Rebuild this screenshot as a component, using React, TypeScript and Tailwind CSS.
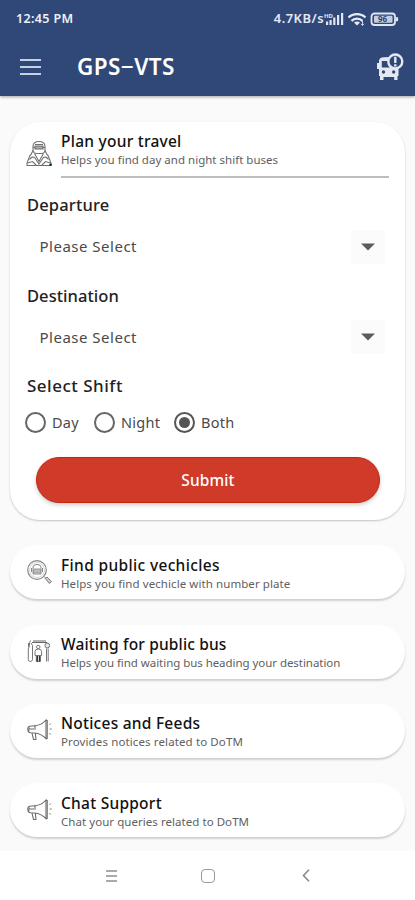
import React, { useState } from 'react';
import { clsx } from 'clsx';

const shifts = [
  { label: 'Day', box: 'w-[69px]' },
  { label: 'Night', box: 'w-[80px]' },
  { label: 'Both', box: 'w-[70px]' },
];

const links = [
  { title: 'Find public vechicles', titleClass: 'tracking-[0.35px]', text: 'Helps you find vechicle with number plate', textClass: 'tracking-[0.08px]', icon: <SearchBusIcon /> },
  { title: 'Waiting for public bus', titleClass: 'tracking-[0.15px]', text: 'Helps you find waiting bus heading your destination', textClass: 'tracking-[-0.05px]', icon: <BusStopIcon /> },
  { title: 'Notices and Feeds', titleClass: 'tracking-[0.25px]', text: 'Provides notices related to DoTM', textClass: 'tracking-[0.12px]', icon: <MegaphoneIcon /> },
  { title: 'Chat Support', titleClass: 'tracking-[0.25px]', text: 'Chat your queries related to DoTM', textClass: 'tracking-[0.05px]', icon: <MegaphoneIcon /> },
];

function StatusIcons() {
  return (
    <svg width="76" height="18" viewBox="0 0 76 18" fill="none" className="block">
      <text x="0" y="7.500" fontSize="6" fontWeight="700" fill="#dfe5f2">HD</text>
      <g fill="#dfe5f2">
        <rect x="2" y="11.500" width="2.200" height="3.500" />
        <rect x="5.500" y="10" width="2.200" height="5" />
        <rect x="9.200" y="7.500" width="2.200" height="7.500" />
        <rect x="13" y="5" width="2.200" height="10" />
        <rect x="17" y="3" width="2.200" height="12" />
      </g>
      <g stroke="#e6ebf5" strokeWidth="2.300">
        <path d="M24.500 7.500c4.500-4.500 12.500-4.500 17 0" />
        <path d="M27.500 10.800c3-2.900 8-2.900 11 0" />
      </g>
      <path d="M30 12.600c1.800-1.500 4.200-1.500 6 0l-3 3z" fill="#e6ebf5" />
      <path d="M38.500 11v4.500m-1.500-1.700 1.500 1.700 1.500-1.700" stroke="#cbd4e6" />
      <rect x="47.500" y="3.500" width="23.500" height="11.500" rx="3" stroke="#dfe5f2" strokeWidth="1.800" />
      <rect x="50" y="5.700" width="18.500" height="7.100" rx="1" fill="#c4cde0" />
      <text x="54" y="12.200" fontSize="8" fontWeight="700" fill="#304878">96</text>
      <path d="M73 7.200v4" stroke="#dfe5f2" strokeWidth="2.200" />
    </svg>
  );
}

function BusAlertIcon() {
  return (
    <svg width="28" height="28" viewBox="0 0 28 28" className="block">
      <path fill="#e3e8f3" fillRule="evenodd" d="M3 8Q3 4.500 8 4.200L15 4v10.500h7.500v8.500h-1v4h-3.300v-3H7.500v3H4v-4H3v-7H1V10h2zM5.800 8v6.500h8V8zM5.800 19a1.700 1.700 0 1 0 3.400 0 1.700 1.700 0 0 0-3.400 0zM16 19a1.700 1.700 0 1 0 3.400 0 1.700 1.700 0 0 0-3.400 0z" />
      <circle cx="19.300" cy="8.500" r="7" fill="#304878" stroke="#e3e8f3" strokeWidth="2.400" />
      <path d="M19.300 3.800v6.200M19.300 11.300v2.200" stroke="#e3e8f3" strokeWidth="2.400" />
    </svg>
  );
}

function TravelIcon() {
  return (
    <svg width="27" height="28" viewBox="0 0 27 28" fill="none" stroke="#707070" strokeWidth="1.100" className="block">
      <path d="M7 10.500V6Q7.500 1.500 13 1.500T19 6v4.500Q18.500 13.500 15.500 13.500h-5q-3 0-3.500-3zM9 4.500h8M7.500 7.500h11" />
      <path d="M9 6h8v3H9z" fill="#aaa" />
      <path d="M7 10.500 5 14.500q-1.500 1-2 3.500L1 23v2.500h24V23l-2-5q-.5-2.500-2-3.500l-2-4" />
      <path d="m8.500 13.500 4.500 8 4.500-8M3.500 19.500q3-4 5.500-1.500l4 6 4-6q2.500-2.500 5.500 1.500M1.500 23l5-1.500 4 4M24.500 23l-5-1.500-4 4" />
      <circle cx="24.500" cy="24.700" r="1.200" fill="#222" stroke="none" />
    </svg>
  );
}

function SearchBusIcon() {
  return (
    <svg width="27" height="28" viewBox="0 0 27 28" fill="none" stroke="#888" strokeWidth="1" className="block">
      <circle cx="11" cy="12" r="9.300" strokeWidth="1.200" />
      <circle cx="11" cy="12" r="7.500" stroke="#c4c4c4" strokeWidth=".7" />
      <path d="M7 16V9Q7 6.500 11 6.500T15 9v7zM5.500 10v4m11-4v4" />
      <path d="M7.500 11h7v4h-7z" fill="#bbb" stroke="#999" />
      <path d="m18 18.500 2 2" />
      <path d="m19.300 20.500 1.500-1.500 4.500 4.600-1.800 1.800z" fill="#ddd" stroke="#666" />
    </svg>
  );
}

function BusStopIcon() {
  return (
    <svg width="27" height="28" viewBox="0 0 27 28" fill="none" stroke="#777" strokeWidth="1" className="block">
      <path d="M6 5.500h15M7 4h13" stroke="#666" />
      <path d="M2.500 6v4M4.500 3.500q-1.500 2-1 5L2.300 12v10.500q0 2 2 2t2.200-2V8.500L5 6" />
      <circle cx="21.300" cy="8.500" r="2.400" fill="#e5e5e5" />
      <path d="M20.500 11.500v13M22.200 11.500v13" />
      <circle cx="12.300" cy="10" r="1.700" />
      <path d="M9 18.500v-4Q9 12 12.300 12t3.300 2.500v4zM10.300 18.500v6h4v-6" />
      <path d="M11.300 19v5.500M13.600 19v5.500" stroke="#333" strokeWidth="1.500" />
    </svg>
  );
}

function MegaphoneIcon() {
  return (
    <svg width="27" height="28" viewBox="0 0 27 28" fill="none" stroke="#6a6a6a" strokeWidth="1.100" className="block">
      <path d="M3.500 10.200 9 9.700q6.500-.5 11-5.700v18.500q-5-5-11.500-5.500l-4-.2q-2.500-.3-2.700-3.300t1.700-3.300z" />
      <path d="M9 9.700v4M4 13h4M3.500 11.500l-1 4M6 17l1.500 6.500h2.500L9.300 17M20 4.500h1.200v18H20" />
      <path d="m23.300 9 1.500-1.500M23.700 13h2M23.300 17l1.500 1.500" strokeWidth=".9" />
    </svg>
  );
}

function Field({ label, value, labelClass }: { label: string; value: string; labelClass: string }) {
  return (
    <div className="h-[90.500px]">
      <h2 className={clsx('pl-[17px] text-[16.500px] leading-6 font-medium text-[#222]', labelClass)}>{label}</h2>
      <button className="mt-[12.500px] flex h-[34px] w-full items-center justify-between pl-[29.500px] pr-5">
        <span className="text-[15px] tracking-[0.500px] text-[#4a4a4a]">{value}</span>
        <span className="flex h-[34px] w-[34px] items-center justify-center bg-[#fbfbfb]">
          <svg width="14" height="8" viewBox="0 0 14 8"><path d="M0 .5h14l-7 7z" fill="#5c5c5c" /></svg>
        </span>
      </button>
    </div>
  );
}

export default function App() {
  const [shift, setShift] = useState('Both');

  return (
    <div className="flex h-[900px] w-full flex-col overflow-hidden bg-[#fafafa] font-['Noto_Sans',sans-serif] whitespace-nowrap">
      <header className="h-[96px] shrink-0 bg-[#304878] text-white shadow-[0_1px_3px_rgba(0,0,0,0.35)]">
        <div className="flex h-[38px] items-center justify-between pl-4 pr-[15px]">
          <span className="text-[12.500px] font-semibold tracking-[0.350px] text-[#edf1f8]">12:45 PM</span>
          <div className="flex items-center">
            <span className="text-[13px] font-semibold tracking-[0.450px] text-[#e2e8f4]">4.7KB/s</span>
            <StatusIcons />
          </div>
        </div>
        <div className="flex h-[58px] items-center pl-5 pr-[11px]">
          <button className="flex w-[21px] flex-col gap-[5px]">
            <span className="h-[2px] bg-[#c8d0e3]" />
            <span className="h-[2px] bg-[#c8d0e3]" />
            <span className="h-[2px] bg-[#c8d0e3]" />
          </button>
          <h1 className="ml-[36px] flex-1 text-[22.500px] font-semibold tracking-[0.400px]">GPS−VTS</h1>
          <button><BusAlertIcon /></button>
        </div>
      </header>

      <main className="flex-1 px-[10px] pt-[26px]">
        <section className="h-[398px] rounded-[30px] bg-white shadow-[0_1px_2px_rgba(0,0,0,0.22)]">
          <div className="flex h-[71px] pl-4 pr-4 pt-[8px]">
            <div className="mt-[10px] w-[35px]"><TravelIcon /></div>
            <div className="h-[47.500px] flex-1 border-b-2 border-[#bdbdbd]">
              <h2 className="text-[15.500px] leading-[23px] font-medium tracking-[0.250px] text-[#111]">Plan your travel</h2>
              <p className="text-[11.500px] leading-[14px] tracking-[0.020px] text-[#606060]">Helps you find day and night shift buses</p>
            </div>
          </div>
          <Field label="Departure" value="Please Select" labelClass="tracking-[0.150px]" />
          <Field label="Destination" value="Please Select" labelClass="tracking-[0.050px]" />
          <h2 className="pl-[17px] text-[17px] leading-6 font-medium tracking-[0.500px] text-[#222]">Select Shift</h2>
          <div className="mt-[11.500px] flex pl-[15px]">
            {shifts.map(s => (
              <button key={s.label} onClick={() => setShift(s.label)} className={clsx('flex h-[26px] items-center gap-[6px]', s.box)}>
                <span className={clsx('flex h-[21px] w-[21px] shrink-0 items-center justify-center rounded-full border-2', shift === s.label ? 'border-[#555]' : 'border-[#666]')}>
                  {shift === s.label && <span className="h-[11px] w-[11px] rounded-full bg-[#555]" />}
                </span>
                <span className="text-[14.500px] tracking-[0.250px] text-[#4a4a4a]">{s.label}</span>
              </button>
            ))}
          </div>
          <button className="mt-[21.500px] ml-[26px] h-[46px] w-[344px] rounded-full border border-[#c7260f] bg-[#cf3a29] pt-[2px] text-[15.500px] font-medium tracking-[0.100px] text-white shadow-[0_2px_4px_rgba(0,0,0,0.2)]">Submit</button>
        </section>

        {links.map(l => (
          <section key={l.title} className="mt-[25.300px] flex h-[54px] rounded-[27px] bg-white pl-4 pt-[8.500px] shadow-[0_2px_2px_rgba(0,0,0,0.17)]">
            <div className="mt-[4px] w-[35px]">{l.icon}</div>
            <div>
              <h2 className={clsx('text-[15.500px] leading-[23px] font-medium text-[#111]', l.titleClass)}>{l.title}</h2>
              <p className={clsx('text-[11.500px] leading-[14px] text-[#606060]', l.textClass)}>{l.text}</p>
            </div>
          </section>
        ))}
      </main>

      <nav className="flex h-[49px] shrink-0 items-center bg-white pl-[106px]">
        <div className="flex w-[11px] flex-col gap-[3px]">
          <span className="h-[2px] bg-[#aaa]" />
          <span className="h-[2px] bg-[#aaa]" />
          <span className="h-[2px] bg-[#aaa]" />
        </div>
        <span className="ml-[84px] h-[14px] w-[14px] rounded-[4px] border-[1.500px] border-[#999]" />
        <svg width="8" height="13" viewBox="0 0 8 13" fill="none" className="ml-[87px]"><path d="M7 .8 1.500 6.500 7 12.200" stroke="#888" strokeWidth="1.600" /></svg>
      </nav>
    </div>
  );
}
